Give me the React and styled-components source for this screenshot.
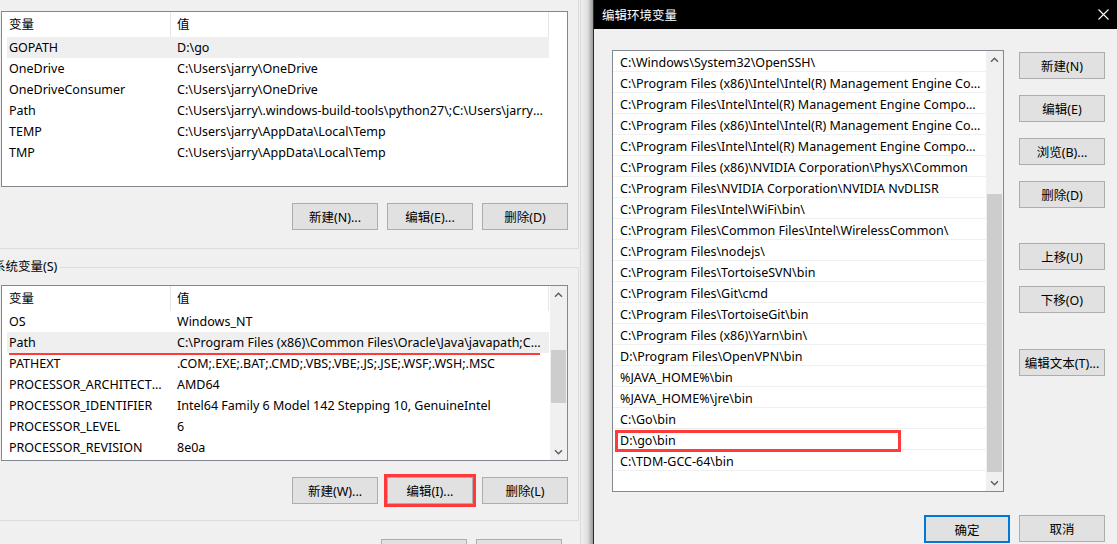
import React from 'react';
import styled, { createGlobalStyle } from 'styled-components';

const GlobalStyle = createGlobalStyle`
  html, body {
    margin: 0;
    padding: 0;
    background: #f0f0f0;
  }
  body {
    font-family: "Noto Sans", "Noto Sans CJK SC", sans-serif;
    font-size: 12.5px;
    color: #000;
  }
  #root {
    width: 1117px;
    height: 544px;
    overflow: hidden;
  }
  * {
    box-sizing: border-box;
  }
`;

const userVars = [
  { name: 'GOPATH', value: 'D:\\go', selected: true },
  { name: 'OneDrive', value: 'C:\\Users\\jarry\\OneDrive' },
  { name: 'OneDriveConsumer', value: 'C:\\Users\\jarry\\OneDrive' },
  { name: 'Path', value: 'C:\\Users\\jarry\\.windows-build-tools\\python27\\;C:\\Users\\jarry\\AppData\\Local\\Microsoft\\WindowsApps' },
  { name: 'TEMP', value: 'C:\\Users\\jarry\\AppData\\Local\\Temp' },
  { name: 'TMP', value: 'C:\\Users\\jarry\\AppData\\Local\\Temp' },
];

const systemVars = [
  { name: 'OS', value: 'Windows_NT' },
  { name: 'Path', value: 'C:\\Program Files (x86)\\Common Files\\Oracle\\Java\\javapath;C:\\Windows\\system32;C:\\Windows', selected: true, underline: true },
  { name: 'PATHEXT', value: '.COM;.EXE;.BAT;.CMD;.VBS;.VBE;.JS;.JSE;.WSF;.WSH;.MSC' },
  { name: 'PROCESSOR_ARCHITECTURE', value: 'AMD64' },
  { name: 'PROCESSOR_IDENTIFIER', value: 'Intel64 Family 6 Model 142 Stepping 10, GenuineIntel' },
  { name: 'PROCESSOR_LEVEL', value: '6' },
  { name: 'PROCESSOR_REVISION', value: '8e0a' },
];

const pathEntries = [
  'C:\\Windows\\System32\\OpenSSH\\',
  'C:\\Program Files (x86)\\Intel\\Intel(R) Management Engine Components\\DAL',
  'C:\\Program Files\\Intel\\Intel(R) Management Engine Components\\DAL',
  'C:\\Program Files (x86)\\Intel\\Intel(R) Management Engine Components\\IPT',
  'C:\\Program Files\\Intel\\Intel(R) Management Engine Components\\IPT',
  'C:\\Program Files (x86)\\NVIDIA Corporation\\PhysX\\Common',
  'C:\\Program Files\\NVIDIA Corporation\\NVIDIA NvDLISR',
  'C:\\Program Files\\Intel\\WiFi\\bin\\',
  'C:\\Program Files\\Common Files\\Intel\\WirelessCommon\\',
  'C:\\Program Files\\nodejs\\',
  'C:\\Program Files\\TortoiseSVN\\bin',
  'C:\\Program Files\\Git\\cmd',
  'C:\\Program Files\\TortoiseGit\\bin',
  'C:\\Program Files (x86)\\Yarn\\bin\\',
  'D:\\Program Files\\OpenVPN\\bin',
  '%JAVA_HOME%\\bin',
  '%JAVA_HOME%\\jre\\bin',
  'C:\\Go\\bin',
  'D:\\go\\bin',
  'C:\\TDM-GCC-64\\bin',
];

const Chevron = ({ down }) => (
  <svg width="9" height="6" viewBox="0 0 9 6">
    <path
      d={down ? 'M1 1.2 L4.5 4.7 L8 1.2' : 'M1 4.8 L4.5 1.3 L8 4.8'}
      fill="none"
      stroke="#606060"
      strokeWidth="1.5"
    />
  </svg>
);

const ScrollBar = ({ thumbTop, thumbSize }) => (
  <Scroll>
    <ScrollArrow><Chevron /></ScrollArrow>
    <Track>
      <Thumb $top={thumbTop} $size={thumbSize} />
    </Track>
    <ScrollArrow><Chevron down /></ScrollArrow>
  </Scroll>
);

const VarList = ({ rows, scroll }) => (
  <ListBox $height={176}>
    <ListMain>
      <HeaderRow>
        <HeaderCell $first>变量</HeaderCell>
        <HeaderCell>值</HeaderCell>
      </HeaderRow>
      {rows.map((r) => (
        <VarRow key={r.name} $selected={r.selected}>
          <NameCell>{r.name}</NameCell>
          <ValueCell>{r.value}</ValueCell>
          {r.underline && <Underline />}
        </VarRow>
      ))}
    </ListMain>
    {scroll ? <ScrollBar thumbTop={47} thumbSize={53} /> : <ScrollGap />}
  </ListBox>
);

export default function App() {
  return (
    <Screen>
      <GlobalStyle />
      <EnvWindow>
        <EnvInner>
          <UserGroup>
            <VarList rows={userVars} />
            <ButtonRow>
              <Button>新建(N)...</Button>
              <Button>编辑(E)...</Button>
              <Button>删除(D)</Button>
            </ButtonRow>
          </UserGroup>

          <SystemGroup>
            <Legend>系统变量(S)</Legend>
            <VarList rows={systemVars} scroll />
            <ButtonRow>
              <Button>新建(W)...</Button>
              <Button $marked>编辑(I)...</Button>
              <Button>删除(L)</Button>
            </ButtonRow>
          </SystemGroup>

          <FooterRow>
            <Button>确定</Button>
            <Button>取消</Button>
          </FooterRow>
        </EnvInner>
      </EnvWindow>

      <WindowShadow />

      <Dialog>
        <TitleBar>
          <Title>编辑环境变量</Title>
          <CloseIcon width="11" height="11" viewBox="0 0 11 11">
            <path d="M0.5 0.5 L10.5 10.5 M10.5 0.5 L0.5 10.5" stroke="#fff" strokeWidth="1.1" />
          </CloseIcon>
        </TitleBar>

        <DialogBody>
          <PathList>
            <PathRows>
              {pathEntries.map((p) => (
                <PathRow key={p}>
                  <PathText>{p}</PathText>
                  {p === 'D:\\go\\bin' && <MarkBox />}
                </PathRow>
              ))}
            </PathRows>
            <ScrollBar thumbTop={126} thumbSize={278} />
          </PathList>

          <SideButtons>
            <Button $gap={0}>新建(N)</Button>
            <Button $gap={16}>编辑(E)</Button>
            <Button $gap={16}>浏览(B)...</Button>
            <Button $gap={16}>删除(D)</Button>
            <Button $gap={35}>上移(U)</Button>
            <Button $gap={16}>下移(O)</Button>
            <Button $gap={36}>编辑文本(T)...</Button>
          </SideButtons>
        </DialogBody>

        <DialogFooter>
          <Button $primary>确定</Button>
          <Button>取消</Button>
        </DialogFooter>
      </Dialog>
    </Screen>
  );
}

const Screen = styled.div`
  display: flex;
  width: 1117px;
  height: 544px;
  overflow: hidden;
  background: #f0f0f0;
`;

/* background window: environment variables */
const EnvWindow = styled.div`
  width: 581px;
  flex-shrink: 0;
  overflow: hidden;
  border-right: 1px solid #dadada;
`;

const EnvInner = styled.div`
  width: 591px;
  margin-left: -12px;
  display: flex;
  flex-direction: column;
`;

const UserGroup = styled.div`
  border: 1px solid #dcdcdc;
  border-top: none;
  padding: 11px 10px 18px 12px;
`;

const SystemGroup = styled.fieldset`
  margin: 10px 0 0;
  min-width: 0;
  border: 1px solid #dcdcdc;
  padding: 0 10px 16px 12px;
  & > div:first-of-type {
    margin-top: 10px;
  }
`;

const Legend = styled.legend`
  margin-left: -10px;
  padding: 0 3px 0 2px;
  line-height: 16px;
  font-size: 12.5px;
`;

const ListBox = styled.div`
  display: flex;
  height: ${(p) => p.$height}px;
  background: #fff;
  border: 1px solid #828790;
`;

const ListMain = styled.div`
  width: 547px;
  flex-shrink: 0;
  display: flex;
  flex-direction: column;
  overflow: hidden;
`;

const HeaderRow = styled.div`
  display: flex;
  height: 25px;
  line-height: 25px;
  border-right: 1px solid #e5e5e5;
`;

const HeaderCell = styled.div`
  ${(p) => (p.$first ? 'width: 169px; border-right: 1px solid #e5e5e5;' : 'flex: 1;')}
  padding-left: ${(p) => (p.$first ? 7 : 6)}px;
`;

const VarRow = styled.div`
  position: relative;
  margin-left: 5px;
  height: 21px;
  line-height: 21px;
  display: grid;
  grid-template-columns: 164px 1fr;
  background: ${(p) => (p.$selected ? '#efefef' : 'transparent')};
`;

const Cell = styled.div`
  white-space: nowrap;
  overflow: hidden;
  text-overflow: ellipsis;
`;

const NameCell = styled(Cell)`
  padding: 0 6px 0 2px;
`;

const ValueCell = styled(Cell)`
  padding: 0 6px 0 6px;
`;

const Underline = styled.span`
  position: absolute;
  left: 2px;
  right: 9px;
  bottom: -2px;
  height: 2px;
  background: #ff3a3a;
`;

const ScrollGap = styled.div`
  flex: 1;
`;

const Scroll = styled.div`
  width: 17px;
  flex-shrink: 0;
  margin-left: auto;
  display: flex;
  flex-direction: column;
  background: #f0f0f0;
`;

const ScrollArrow = styled.div`
  height: 17px;
  display: flex;
  align-items: center;
  justify-content: center;
`;

const Track = styled.div`
  flex: 1;
  display: flex;
  flex-direction: column;
`;

const Thumb = styled.div`
  margin: ${(p) => p.$top}px 1px 0;
  height: ${(p) => p.$size}px;
  background: #cdcdcd;
`;

const ButtonRow = styled.div`
  display: flex;
  justify-content: flex-end;
  gap: 9px;
  margin-top: 16px;
`;

const FooterRow = styled.div`
  display: flex;
  justify-content: flex-end;
  gap: 9px;
  margin-top: 18px;
  padding-right: 17px;
`;

const Button = styled.button`
  width: 86px;
  height: ${(p) => (p.$primary ? 28 : 27)}px;
  flex-shrink: 0;
  margin-top: ${(p) => p.$gap || 0}px;
  padding: 0;
  font-family: "Noto Sans", "Noto Sans CJK SC", sans-serif;
  font-size: 12.5px;
  color: #000;
  background: #e1e1e1;
  border: ${(p) => (p.$primary ? '2px solid #0078d7' : '1px solid #adadad')};
  outline: ${(p) => (p.$marked ? '3px solid #ff3a3a' : 'none')};
  white-space: nowrap;
`;

const WindowShadow = styled.div`
  width: 12px;
  flex-shrink: 0;
  background: linear-gradient(to right, #f0f0f0 0%, #dedede 55%, #9a9a9a 100%);
`;

/* foreground dialog: edit PATH */
const Dialog = styled.div`
  width: 524px;
  flex-shrink: 0;
  display: flex;
  flex-direction: column;
  border-left: 1px solid #2b2b2b;
  background: #f0f0f0;
`;

const TitleBar = styled.div`
  height: 29px;
  flex-shrink: 0;
  background: #000;
  display: flex;
  align-items: center;
  justify-content: space-between;
  padding: 0 8px 0 8px;
`;

const Title = styled.div`
  color: #fff;
  font-size: 12.5px;
`;

const CloseIcon = styled.svg`
  display: block;
`;

const DialogBody = styled.div`
  display: flex;
  gap: 15px;
  padding: 21px 12px 0 18px;
`;

const PathList = styled.div`
  width: 392px;
  height: 442px;
  display: flex;
  background: #fff;
  border: 1px solid #828790;
`;

const PathRows = styled.div`
  flex: 1;
  min-width: 0;
  display: flex;
  flex-direction: column;
`;

const PathRow = styled.div`
  position: relative;
  height: 21px;
  flex-shrink: 0;
  border-bottom: 1px solid #f0f0f0;
  padding: 2px 5px 0 7px;
  line-height: 19px;
`;

const PathText = styled.div`
  white-space: nowrap;
  overflow: hidden;
  text-overflow: ellipsis;
`;

const MarkBox = styled.span`
  position: absolute;
  left: 2px;
  top: 1px;
  width: 286px;
  height: 22px;
  border: 3px solid #ff3a3a;
`;

const SideButtons = styled.div`
  display: flex;
  flex-direction: column;
  padding-top: 2px;
`;

const DialogFooter = styled.div`
  display: flex;
  justify-content: flex-end;
  gap: 9px;
  margin-top: 23px;
  padding-right: 12px;
`;
